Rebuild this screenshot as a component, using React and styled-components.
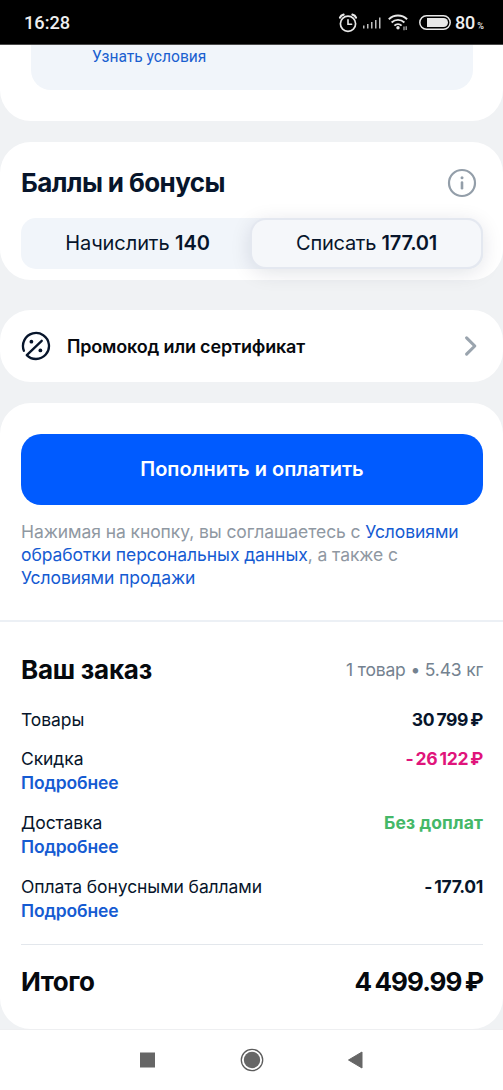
import styled, { createGlobalStyle } from "styled-components";

const ROWS = [
  { label: "Товары", value: "30 799 ₽" },
  { label: "Скидка", value: "- 26 122 ₽", color: "#e0147b", more: true },
  { label: "Доставка", value: "Без доплат", color: "#45b868", more: true, ls: 0.12 },
  { label: "Оплата бонусными баллами", value: "- 177.01", more: true },
];

const AlarmIcon = () => (
  <svg width="20" height="20" viewBox="0 0 20 20" fill="none" stroke="#e8e8e8" strokeLinecap="round">
    <circle cx="10" cy="10.8" r="7.6" strokeWidth="1.7" />
    <path d="M10 6.8V11.2H13.6" strokeWidth="1.6" />
    <path d="M2 4.6C2.6 3 4 1.9 5.6 1.6M18 4.6C17.4 3 16 1.9 14.4 1.6" strokeWidth="2.2" />
  </svg>
);

const SignalIcon = () => (
  <svg width="18" height="12" viewBox="0 0 18 12" fill="#bdbdbd">
    <rect x="0" y="8.5" width="1.5" height="3" />
    <rect x="4" y="7" width="1.5" height="4.5" />
    <rect x="8" y="5" width="1.5" height="6.5" />
    <rect x="12" y="3" width="1.5" height="8.5" />
    <rect x="16" y="0.5" width="1.5" height="11" />
  </svg>
);

const WifiIcon = () => (
  <svg width="20" height="17" viewBox="0 0 20 17" fill="none" stroke="#e8e8e8" strokeWidth="1.9">
    <path d="M0.8 5.3C6 0.3 13.9 0.3 19.1 5.3" />
    <path d="M3.6 8.5C7.3 5 12.7 5 16.4 8.5" />
    <path d="M6.4 11.6C8.5 9.6 11.5 9.6 13.6 11.6" />
    <circle cx="10" cy="13.8" r="1.7" fill="#e8e8e8" stroke="none" />
    <path d="M16 16.2V12.4M18.2 12.2V16" strokeWidth="1.2" stroke="#bbb" />
  </svg>
);

const BatteryIcon = () => (
  <svg width="32" height="15" viewBox="0 0 32 15">
    <rect x="0.8" y="0.8" width="30.4" height="13.4" rx="6.7" fill="none" stroke="#e8e8e8" strokeWidth="1.5" />
    <path d="M8 3H24.5A4.5 4.5 0 0 1 24.5 12H8Z" fill="#e8e8e8" />
  </svg>
);

const InfoIcon = () => (
  <svg width="30" height="30" viewBox="0 0 30 30">
    <circle cx="15" cy="15" r="13" fill="none" stroke="#939ea9" strokeWidth="2.2" />
    <circle cx="15" cy="9.8" r="1.5" fill="#939ea9" />
    <path d="M15 14.6V20.3" stroke="#939ea9" strokeWidth="2.6" strokeLinecap="round" />
  </svg>
);

const PercentIcon = () => (
  <svg width="30" height="30" viewBox="0 0 30 30" fill="none" stroke="#07152b" strokeWidth="2.3" strokeLinecap="round" strokeLinejoin="round">
    <path d="M2.9 19.8A13 13 0 1 1 15 28C11.3 28 8 26.5 5.8 24.1L20.7 9.8" />
    <circle cx="10.4" cy="10.7" r="1.9" fill="#07152b" stroke="none" />
    <circle cx="19.4" cy="19.4" r="1.9" fill="#07152b" stroke="none" />
  </svg>
);

const Chevron = () => (
  <svg width="14" height="22" viewBox="0 0 14 22" fill="none" stroke="#9aa4ae" strokeWidth="3.1" strokeLinecap="round" strokeLinejoin="round">
    <path d="M2.6 2.8L10.8 11L2.6 19.2" />
  </svg>
);

const App = () => {
  return (
    <Screen>
      <GlobalStyle />
      <StatusBar>
        <Clock>16:28</Clock>
        <StatusIcons>
          <AlarmIcon />
          <SignalIcon />
          <WifiIcon />
          <BatteryIcon />
          <Charge>
            80<small>%</small>
          </Charge>
        </StatusIcons>
      </StatusBar>

      <TermsCard>
        <TermsPanel>
          <TermsLink>Узнать условия</TermsLink>
        </TermsPanel>
      </TermsCard>

      <PointsCard>
        <PointsHeader>
          <Title $color="#07152b" $ls={-0.6}>Баллы и бонусы</Title>
          <InfoIcon />
        </PointsHeader>
        <Segmented>
          <Segment>
            Начислить <b>140</b>
          </Segment>
          <Segment $active>
            Списать <b>177.01</b>
          </Segment>
        </Segmented>
      </PointsCard>

      <PromoCard>
        <PercentIcon />
        <PromoText>Промокод или сертификат</PromoText>
        <Chevron />
      </PromoCard>

      <OrderCard>
        <PayButton>Пополнить и оплатить</PayButton>
        <Legal>
          Нажимая на кнопку, вы соглашаетесь с <a>Условиями</a>
          <br />
          <a>обработки персональных данных</a>, а также с
          <br />
          <a>Условиями продажи</a>
        </Legal>
        <Divider />
        <Summary>
          <SummaryHeader>
            <Title $ls={-0.25}>Ваш заказ</Title>
            <Meta>1 товар • 5.43 кг</Meta>
          </SummaryHeader>
          <Rows>
            {ROWS.map((row) => (
              <Row key={row.label}>
                <div>
                  <Label>{row.label}</Label>
                  {row.more && <More>Подробнее</More>}
                </div>
                <Value $color={row.color} $ls={row.ls}>{row.value}</Value>
              </Row>
            ))}
          </Rows>
          <Total>
            <Title $ls={-0.5}>Итого</Title>
            <Title $ls={-0.95} $tight>4 499.99 ₽</Title>
          </Total>
        </Summary>
      </OrderCard>

      <NavBar>
        <svg width="16" height="16" viewBox="0 0 16 16">
          <rect x="0" y="0.5" width="15" height="15" fill="#666" />
        </svg>
        <svg width="24" height="24" viewBox="0 0 24 24">
          <circle cx="12" cy="12" r="10.7" fill="none" stroke="#5c5c5c" strokeWidth="1.3" />
          <circle cx="12" cy="12" r="8.2" fill="#666" />
        </svg>
        <svg width="16" height="18" viewBox="0 0 16 18">
          <path d="M0.5 9L14 1V17Z" fill="#666" stroke="#666" strokeLinejoin="round" />
        </svg>
      </NavBar>
    </Screen>
  );
};

const GlobalStyle = createGlobalStyle`
  * {
    box-sizing: border-box;
  }
  body {
    margin: 0;
    background: #f0f2f4;
    font-family: Inter, "Liberation Sans", sans-serif;
    color: #07152b;
  }
  svg {
    display: block;
    flex-shrink: 0;
  }
`;

const Screen = styled.div`
  width: 503px;
  height: 1090px;
  display: flex;
  flex-direction: column;
  overflow: hidden;
`;

const StatusBar = styled.header`
  height: 45px;
  flex-shrink: 0;
  display: flex;
  justify-content: space-between;
  align-items: center;
  padding: 1px 19px 0 24px;
  background: #000;
  border-bottom: 1px solid #4a4a4a;
  color: #efefef;
  font-family: Roboto, sans-serif;
  font-weight: 500;
`;

const Clock = styled.span`
  font-size: 18.2px;
`;

const StatusIcons = styled.div`
  display: flex;
  align-items: center;
  svg:nth-child(2) {
    margin-left: 5px;
  }
  svg:nth-child(3) {
    margin-left: 7px;
  }
  svg:nth-child(4) {
    margin-left: 11px;
  }
`;

const Charge = styled.span`
  margin-left: 4px;
  font-size: 18px;
  small {
    margin-left: 2px;
    font-size: 9px;
  }
`;

const Card = styled.section`
  flex-shrink: 0;
  background: #fff;
  border-radius: 31px;
`;

const TermsCard = styled(Card)`
  height: 76px;
  padding: 0 30px 0 31px;
  border-radius: 0 0 31px 31px;
`;

const TermsPanel = styled.div`
  height: 45px;
  padding: 2px 61px 0;
  background: #f1f5fa;
  border-radius: 0 0 20px 20px;
`;

const TermsLink = styled.a`
  display: block;
  font-family: Roboto, sans-serif;
  font-size: 15.6px;
  line-height: 20px;
  color: #1a5fd0;
`;

const PointsCard = styled(Card)`
  height: 138px;
  margin-top: 21px;
  padding: 25px 20px 0 21px;
`;

const PointsHeader = styled.div`
  display: flex;
  justify-content: space-between;
  align-items: center;
  padding-right: 6px;
`;

const Title = styled.h2`
  margin: 0;
  font-size: 26px;
  line-height: 32px;
  font-weight: 700;
  letter-spacing: ${(props) => props.$ls}px;
  word-spacing: ${(props) => (props.$tight ? "-2px" : "0")};
  color: ${(props) => props.$color || "#06090e"};
`;

const Segmented = styled.div`
  height: 51px;
  margin-top: 19px;
  display: grid;
  grid-template-columns: 1fr 1fr;
  padding: 2px;
  background: #f1f5fa;
  border-radius: 15px;
`;

const Segment = styled.div`
  display: flex;
  align-items: center;
  justify-content: center;
  padding-bottom: 1px;
  font-size: 20px;
  letter-spacing: -0.08px;
  white-space: pre;
  border-radius: 14px;
  b {
    font-weight: 600;
  }
  ${(props) =>
    props.$active &&
    `
    letter-spacing: -0.25px;
    background: #f5f7fa;
    box-shadow: 0 0 0 2px #e4e8f0, 0 4px 22px rgba(0, 20, 60, 0.14);
  `}
`;

const PromoCard = styled(Card)`
  height: 72px;
  margin-top: 30px;
  padding: 0 25px 0 21px;
  display: flex;
  align-items: center;
`;

const PromoText = styled.span`
  flex: 1;
  margin-left: 16px;
  font-size: 18px;
  font-weight: 600;
  letter-spacing: -0.17px;
  color: #06090e;
`;

const OrderCard = styled(Card)`
  height: 626px;
  margin-top: 21px;
  padding-top: 31px;
`;

const PayButton = styled.button`
  display: block;
  width: 462px;
  height: 71px;
  margin: 0 20px 0 21px;
  padding: 0 0 2px;
  border: none;
  border-radius: 20px;
  background: #005bff;
  color: #fff;
  font-family: inherit;
  font-size: 20px;
  font-weight: 600;
`;

const Legal = styled.p`
  margin: 15px 20px 0 21px;
  font-size: 17.5px;
  line-height: 23px;
  letter-spacing: -0.08px;
  white-space: nowrap;
  color: #8f98a2;
  a {
    color: #155bd2;
  }
`;

const Divider = styled.div`
  height: 2px;
  margin-top: 31px;
  background: #ecf0f5;
`;

const Summary = styled.div`
  padding: 32px 20px 0 21px;
`;

const SummaryHeader = styled.div`
  display: flex;
  justify-content: space-between;
  align-items: center;
`;

const Meta = styled.span`
  padding-bottom: 2px;
  font-size: 17.5px;
  letter-spacing: -0.17px;
  color: #748290;
`;

const Rows = styled.div`
  display: flex;
  flex-direction: column;
  gap: 15px;
  margin-top: 22px;
`;

const Row = styled.div`
  display: flex;
  justify-content: space-between;
  font-size: 17.5px;
`;

const Label = styled.div`
  line-height: 24px;
  letter-spacing: -0.09px;
`;

const More = styled.div`
  padding-bottom: 1px;
  line-height: 24px;
  font-weight: 600;
  letter-spacing: -0.15px;
  color: #155bd2;
`;

const Value = styled.div`
  line-height: 24px;
  font-weight: 700;
  letter-spacing: ${(props) => props.$ls ?? -0.35}px;
  word-spacing: ${(props) => (props.$ls ? "0" : "-1.5px")};
  color: ${(props) => props.$color || "#07152b"};
`;

const Total = styled.div`
  display: flex;
  justify-content: space-between;
  margin-top: 20px;
  padding-top: 21px;
  border-top: 1px solid #e3e7ec;
`;

const NavBar = styled.nav`
  height: 61px;
  flex-shrink: 0;
  display: flex;
  justify-content: center;
  align-items: center;
  gap: 84px;
  background: #fff;
  border-top: 1px solid #eeeff1;
`;

export default App;
